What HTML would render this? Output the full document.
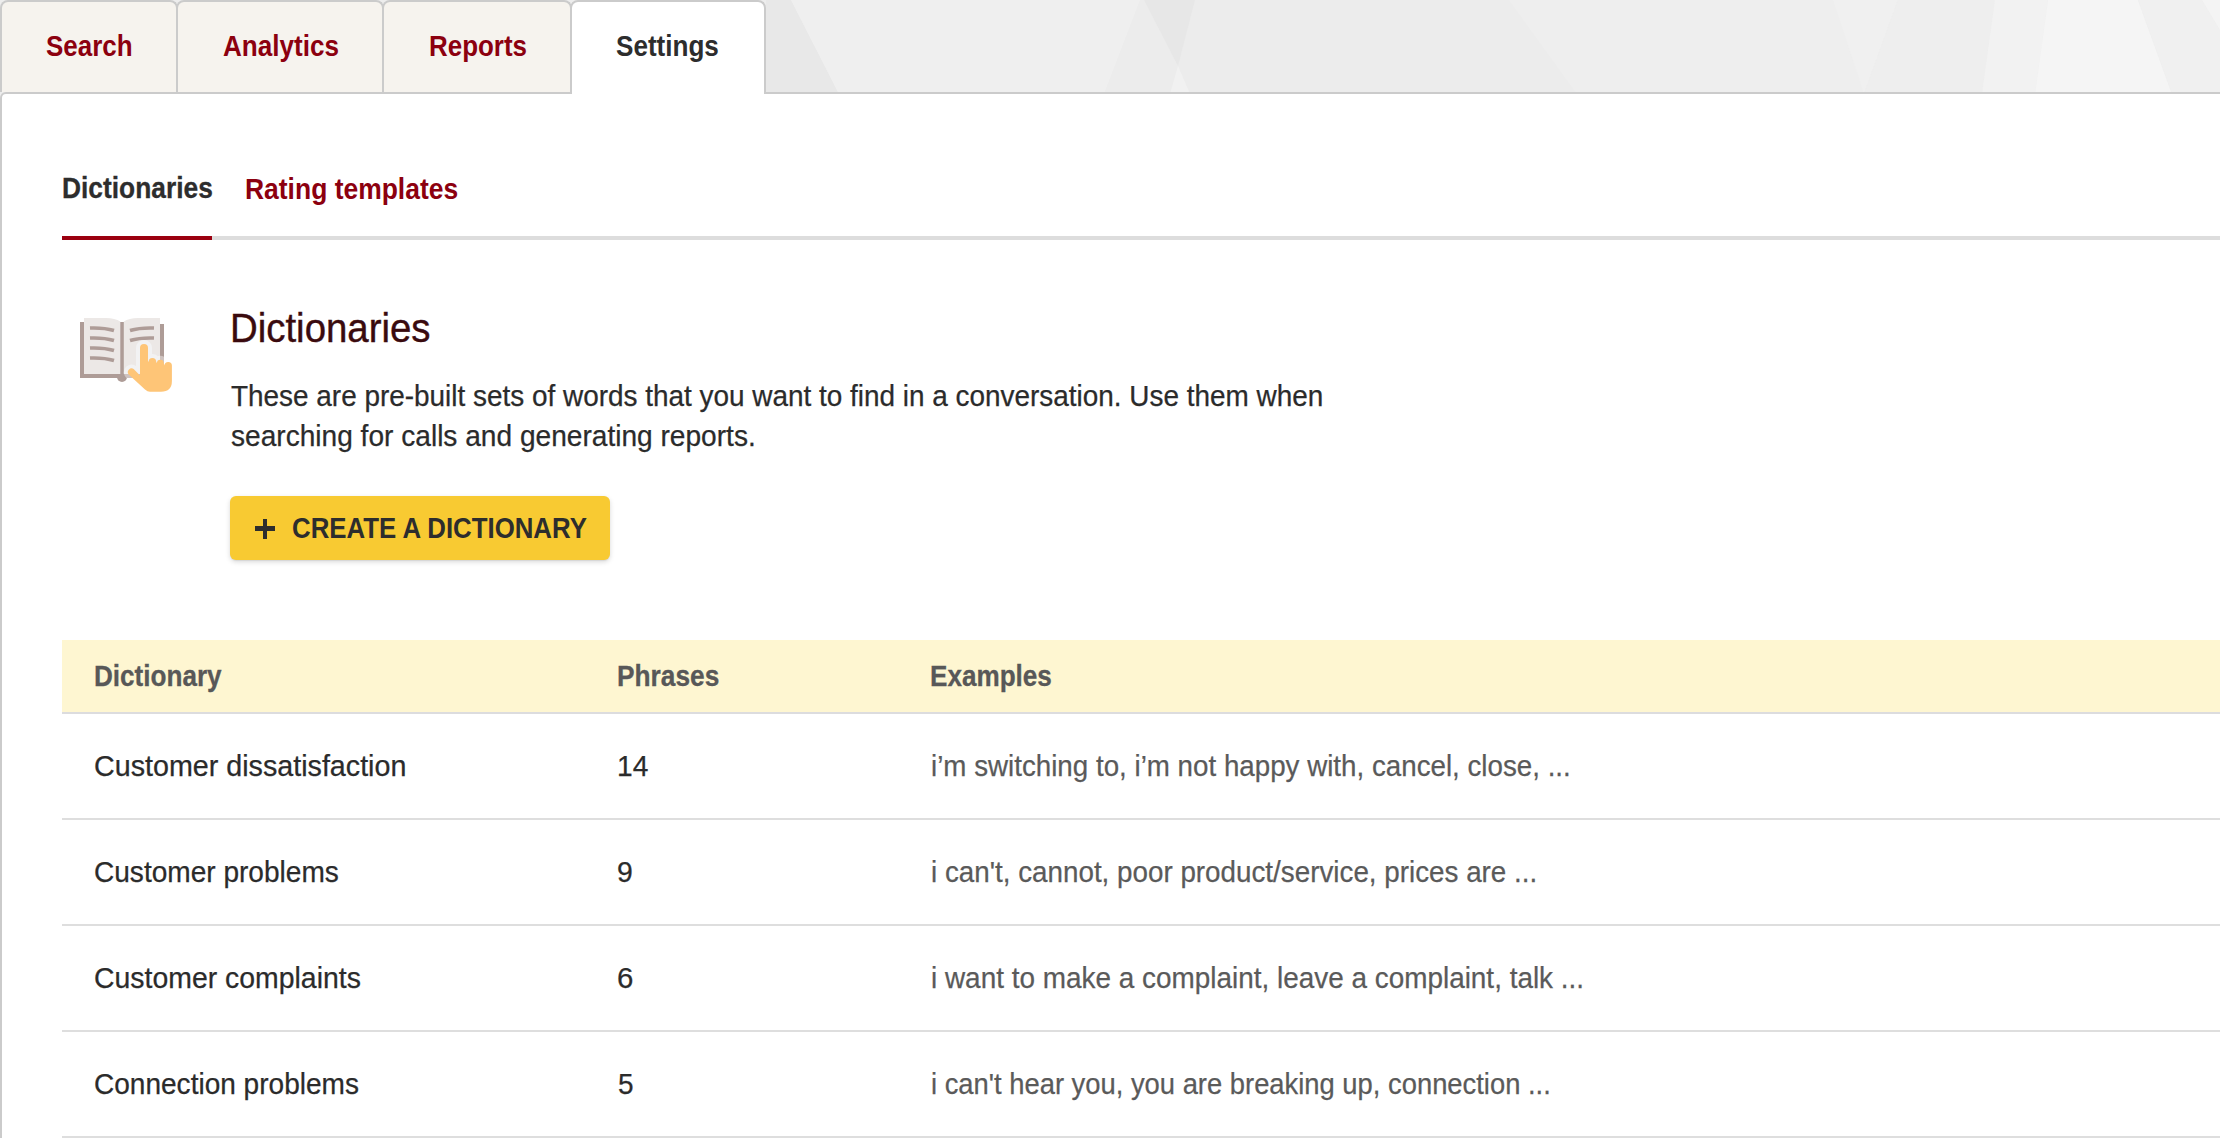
<!DOCTYPE html>
<html><head><meta charset="utf-8"><title>Settings - Dictionaries</title>
<style>
html,body{margin:0;padding:0;}
body{width:2220px;height:1138px;overflow:hidden;position:relative;background:#eeeeee;font-family:"Liberation Sans",sans-serif;}
.bg{position:absolute;left:0;top:0;}
.panel{position:absolute;left:0;top:92px;width:2240px;height:1100px;box-sizing:border-box;border:2px solid #cbcbcb;border-top-left-radius:6px;background:#fff;}
.tab{position:absolute;top:0;height:92px;box-sizing:border-box;border:2px solid #cbcbcb;border-bottom:none;border-radius:8px 8px 0 0;background:#f6f3ee;}
.tab.sel{background:#fff;height:94px;z-index:2;}
.t{position:absolute;white-space:nowrap;z-index:3;}
.line{position:absolute;}
.icon{position:absolute;left:60px;top:290px;}
.btn{position:absolute;left:230px;top:496px;width:380px;height:64px;border-radius:6px;background:#f8ca32;box-shadow:0 2px 5px rgba(0,0,0,0.15),0 1px 1px rgba(0,0,0,0.06);}
</style></head><body>
<svg class="bg" width="2220" height="94" viewBox="0 0 2220 94">
<rect width="2220" height="94" fill="#ededed"/>
<polygon points="766,0 791,0 839,94 766,94" fill="#e8e8e8"/>
<polygon points="791,0 1140,0 1104,94 839,94" fill="#efefef"/>
<polygon points="1140,0 1509,0 1577,94 1104,94" fill="#ececec"/>
<polygon points="1509,0 1833,0 1864,94 1577,94" fill="#eeeeee"/>
<polygon points="1144,0 1195,0 1178,66" fill="#e7e7e7"/>
<polygon points="1178,66 1190,94 1170,94" fill="#f1f1f1"/>
<polygon points="1833,0 1898,0 1864,94" fill="#f0f0f0"/>
<polygon points="1898,0 1995,0 1982,94 1864,94" fill="#eeeeee"/>
<polygon points="1995,0 2048,0 2035,94 1982,94" fill="#f2f2f2"/>
<polygon points="2048,0 2138,0 2172,94 2035,94" fill="#f5f5f5"/>
<polygon points="2138,0 2202,0 2220,30 2220,94 2172,94" fill="#f0f0f0"/>
<polygon points="2202,0 2220,0 2220,30" fill="#f4f4f4"/>
</svg>
<div class="panel"></div>
<div class="tab" style="left:0;width:178px;"></div>
<div class="tab" style="left:176px;width:208px;"></div>
<div class="tab" style="left:382px;width:190px;"></div>
<div class="tab sel" style="left:570px;width:196px;"></div>
<div class="line" style="left:62px;top:236px;width:2158px;height:4px;background:#dddddd;"></div>
<div class="line" style="left:62px;top:236px;width:150px;height:4px;background:#9b0010;"></div>
<svg class="icon" width="140" height="120" viewBox="60 290 140 120">
<defs>
<clipPath id="cp"><rect x="84" y="316" width="76" height="58"/></clipPath>
<clipPath id="cc"><rect x="80" y="374" width="84" height="4"/><rect x="160" y="324" width="4" height="54"/></clipPath>
</defs>
<rect x="80" y="322" width="44" height="56" fill="#ae9c97"/>
<rect x="120" y="324" width="44" height="54" fill="#ae9c97"/>
<rect x="120" y="322" width="4" height="4" fill="#ae9c97"/>
<circle cx="122" cy="377" r="5" fill="#ae9c97"/>
<path d="M84,318 L106,318 Q115,318 120.3,321.5 L120.3,374 L84,374 Z" fill="#ece8e6"/>
<path d="M123.8,321.5 Q129,318 138,318 L160,318 L160,374 L123.8,374 Z" fill="#ece8e6"/>
<g stroke="#ae9c97" stroke-width="3.6" fill="none">
<path d="M90,328 Q104,327.5 114,330.5"/>
<path d="M90,338 Q104,337.5 114,340.5"/>
<path d="M90,348 Q104,347.5 114,350.5"/>
<path d="M90,358 Q104,357.5 114,360.5"/>
<path d="M130,330.5 Q140,327.5 154,328"/>
<path d="M130,340.5 Q140,337.5 154,338"/>
</g>
<g clip-path="url(#cp)"><path d="M140,348 A4,4 0 0 1 148,348 L148,361.6 L148.7,361.6 A3.7,3.7 0 0 1 156.1,361.6 L156.9,363.3 A3.45,3.45 0 0 1 163.8,363.3 L164.5,365.6 A3.7,3.7 0 0 1 171.9,365.6 L171.9,381 Q171.9,391.7 161,391.7 L150,391.7 Q147.5,391.7 145,389.5 L128.7,374.5 A3.7,3.7 0 0 1 133.9,369.3 L140,375.4 Z" fill="#f2f2f3" stroke="#f2f2f3" stroke-width="8" stroke-linejoin="round"/></g>
<g clip-path="url(#cc)"><path d="M140,348 A4,4 0 0 1 148,348 L148,361.6 L148.7,361.6 A3.7,3.7 0 0 1 156.1,361.6 L156.9,363.3 A3.45,3.45 0 0 1 163.8,363.3 L164.5,365.6 A3.7,3.7 0 0 1 171.9,365.6 L171.9,381 Q171.9,391.7 161,391.7 L150,391.7 Q147.5,391.7 145,389.5 L128.7,374.5 A3.7,3.7 0 0 1 133.9,369.3 L140,375.4 Z" fill="#cfc3c0" stroke="#cfc3c0" stroke-width="8" stroke-linejoin="round"/></g>
<path d="M140,348 A4,4 0 0 1 148,348 L148,361.6 L148.7,361.6 A3.7,3.7 0 0 1 156.1,361.6 L156.9,363.3 A3.45,3.45 0 0 1 163.8,363.3 L164.5,365.6 A3.7,3.7 0 0 1 171.9,365.6 L171.9,381 Q171.9,391.7 161,391.7 L150,391.7 Q147.5,391.7 145,389.5 L128.7,374.5 A3.7,3.7 0 0 1 133.9,369.3 L140,375.4 Z" fill="#fec577"/>
</svg>
<div class="btn"></div>
<div class="line" style="left:255px;top:526px;width:20px;height:4.5px;background:#2d2d2d;"></div>
<div class="line" style="left:263px;top:518.5px;width:4.4px;height:20.4px;background:#2d2d2d;"></div>
<div class="line" style="left:62px;top:640px;width:2158px;height:72px;background:#fef6d1;"></div>
<div class="line" style="left:62px;top:712px;width:2158px;height:2px;background:#dcdcde;"></div>
<div class="line" style="left:62px;top:818px;width:2158px;height:2px;background:#dedede;"></div>
<div class="line" style="left:62px;top:924px;width:2158px;height:2px;background:#dedede;"></div>
<div class="line" style="left:62px;top:1030px;width:2158px;height:2px;background:#dedede;"></div>
<div class="line" style="left:62px;top:1136px;width:2158px;height:2px;background:#dedede;"></div>
<div class="t" style="left:46.00px;top:32.00px;font-size:29px;line-height:29px;color:#8c000f;letter-spacing:0.000px;font-weight:bold;transform:scaleX(0.8957);transform-origin:0 0;">Search</div>
<div class="t" style="left:222.90px;top:32.00px;font-size:29px;line-height:29px;color:#8c000f;letter-spacing:0.000px;font-weight:bold;transform:scaleX(0.8992);transform-origin:0 0;">Analytics</div>
<div class="t" style="left:428.70px;top:32.00px;font-size:29px;line-height:29px;color:#8c000f;letter-spacing:0.000px;font-weight:bold;transform:scaleX(0.8944);transform-origin:0 0;">Reports</div>
<div class="t" style="left:616.30px;top:32.00px;font-size:29px;line-height:29px;color:#2d2d2d;letter-spacing:0.000px;font-weight:bold;transform:scaleX(0.8991);transform-origin:0 0;">Settings</div>
<div class="t" style="left:62.00px;top:174.00px;font-size:29px;line-height:29px;color:#2d2d2d;letter-spacing:0.000px;font-weight:bold;-webkit-text-stroke:0.3px currentColor;transform:scaleX(0.9085);transform-origin:0 0;">Dictionaries</div>
<div class="t" style="left:245.10px;top:175.00px;font-size:29px;line-height:29px;color:#8c000f;letter-spacing:0.000px;font-weight:bold;transform:scaleX(0.9121);transform-origin:0 0;">Rating templates</div>
<div class="t" style="left:229.70px;top:308.00px;font-size:41px;line-height:41px;color:#3a0a0e;letter-spacing:0.000px;font-weight:normal;-webkit-text-stroke:0.4px currentColor;transform:scaleX(0.9362);transform-origin:0 0;">Dictionaries</div>
<div class="t" style="left:230.70px;top:382.00px;font-size:29px;line-height:29px;color:#2b2b2b;letter-spacing:0.000px;font-weight:normal;-webkit-text-stroke:0.25px currentColor;transform:scaleX(0.9625);transform-origin:0 0;">These are pre-built sets of words that you want to find in a conversation. Use them when</div>
<div class="t" style="left:230.70px;top:422.00px;font-size:29px;line-height:29px;color:#2b2b2b;letter-spacing:0.000px;font-weight:normal;-webkit-text-stroke:0.25px currentColor;transform:scaleX(0.9688);transform-origin:0 0;">searching for calls and generating reports.</div>
<div class="t" style="left:292.00px;top:514.00px;font-size:29px;line-height:29px;color:#2d2d2d;letter-spacing:0.000px;font-weight:bold;transform:scaleX(0.8900);transform-origin:0 0;">CREATE A DICTIONARY</div>
<div class="t" style="left:94.00px;top:662.00px;font-size:29px;line-height:29px;color:#585858;letter-spacing:0.000px;font-weight:bold;-webkit-text-stroke:0.3px currentColor;transform:scaleX(0.9000);transform-origin:0 0;">Dictionary</div>
<div class="t" style="left:617.00px;top:662.00px;font-size:29px;line-height:29px;color:#585858;letter-spacing:0.000px;font-weight:bold;-webkit-text-stroke:0.3px currentColor;transform:scaleX(0.9063);transform-origin:0 0;">Phrases</div>
<div class="t" style="left:930.40px;top:662.00px;font-size:29px;line-height:29px;color:#585858;letter-spacing:0.000px;font-weight:bold;-webkit-text-stroke:0.3px currentColor;transform:scaleX(0.9000);transform-origin:0 0;">Examples</div>
<div class="t" style="left:94.00px;top:752.00px;font-size:29px;line-height:29px;color:#2b2b2b;letter-spacing:0.000px;font-weight:normal;-webkit-text-stroke:0.25px currentColor;transform:scaleX(0.9889);transform-origin:0 0;">Customer dissatisfaction</div>
<div class="t" style="left:616.80px;top:752.00px;font-size:29px;line-height:29px;color:#2b2b2b;letter-spacing:0.000px;font-weight:normal;-webkit-text-stroke:0.25px currentColor;transform:scaleX(0.9700);transform-origin:0 0;">14</div>
<div class="t" style="left:931.30px;top:752.00px;font-size:29px;line-height:29px;color:#5a5a5a;letter-spacing:0.000px;font-weight:normal;-webkit-text-stroke:0.25px currentColor;transform:scaleX(0.9565);transform-origin:0 0;">i’m switching to, i’m not happy with, cancel, close, ...</div>
<div class="t" style="left:94.00px;top:858.00px;font-size:29px;line-height:29px;color:#2b2b2b;letter-spacing:0.000px;font-weight:normal;-webkit-text-stroke:0.25px currentColor;transform:scaleX(0.9675);transform-origin:0 0;">Customer problems</div>
<div class="t" style="left:616.80px;top:858.00px;font-size:29px;line-height:29px;color:#2b2b2b;letter-spacing:0.000px;font-weight:normal;-webkit-text-stroke:0.25px currentColor;transform:scaleX(0.9786);transform-origin:0 0;">9</div>
<div class="t" style="left:930.90px;top:858.00px;font-size:29px;line-height:29px;color:#5a5a5a;letter-spacing:0.000px;font-weight:normal;-webkit-text-stroke:0.25px currentColor;transform:scaleX(0.9583);transform-origin:0 0;">i can't, cannot, poor product/service, prices are ...</div>
<div class="t" style="left:94.00px;top:964.00px;font-size:29px;line-height:29px;color:#2b2b2b;letter-spacing:0.000px;font-weight:normal;-webkit-text-stroke:0.25px currentColor;transform:scaleX(0.9797);transform-origin:0 0;">Customer complaints</div>
<div class="t" style="left:616.80px;top:964.00px;font-size:29px;line-height:29px;color:#2b2b2b;letter-spacing:0.000px;font-weight:normal;-webkit-text-stroke:0.25px currentColor;transform:scaleX(1.0143);transform-origin:0 0;">6</div>
<div class="t" style="left:930.90px;top:964.00px;font-size:29px;line-height:29px;color:#5a5a5a;letter-spacing:0.000px;font-weight:normal;-webkit-text-stroke:0.25px currentColor;transform:scaleX(0.9624);transform-origin:0 0;">i want to make a complaint, leave a complaint, talk ...</div>
<div class="t" style="left:94.00px;top:1070.00px;font-size:29px;line-height:29px;color:#2b2b2b;letter-spacing:0.000px;font-weight:normal;-webkit-text-stroke:0.25px currentColor;transform:scaleX(0.9667);transform-origin:0 0;">Connection problems</div>
<div class="t" style="left:617.50px;top:1070.00px;font-size:29px;line-height:29px;color:#2b2b2b;letter-spacing:0.000px;font-weight:normal;-webkit-text-stroke:0.25px currentColor;transform:scaleX(0.9643);transform-origin:0 0;">5</div>
<div class="t" style="left:930.90px;top:1070.00px;font-size:29px;line-height:29px;color:#5a5a5a;letter-spacing:0.000px;font-weight:normal;-webkit-text-stroke:0.25px currentColor;transform:scaleX(0.9436);transform-origin:0 0;">i can't hear you, you are breaking up, connection ...</div>
</body></html>
